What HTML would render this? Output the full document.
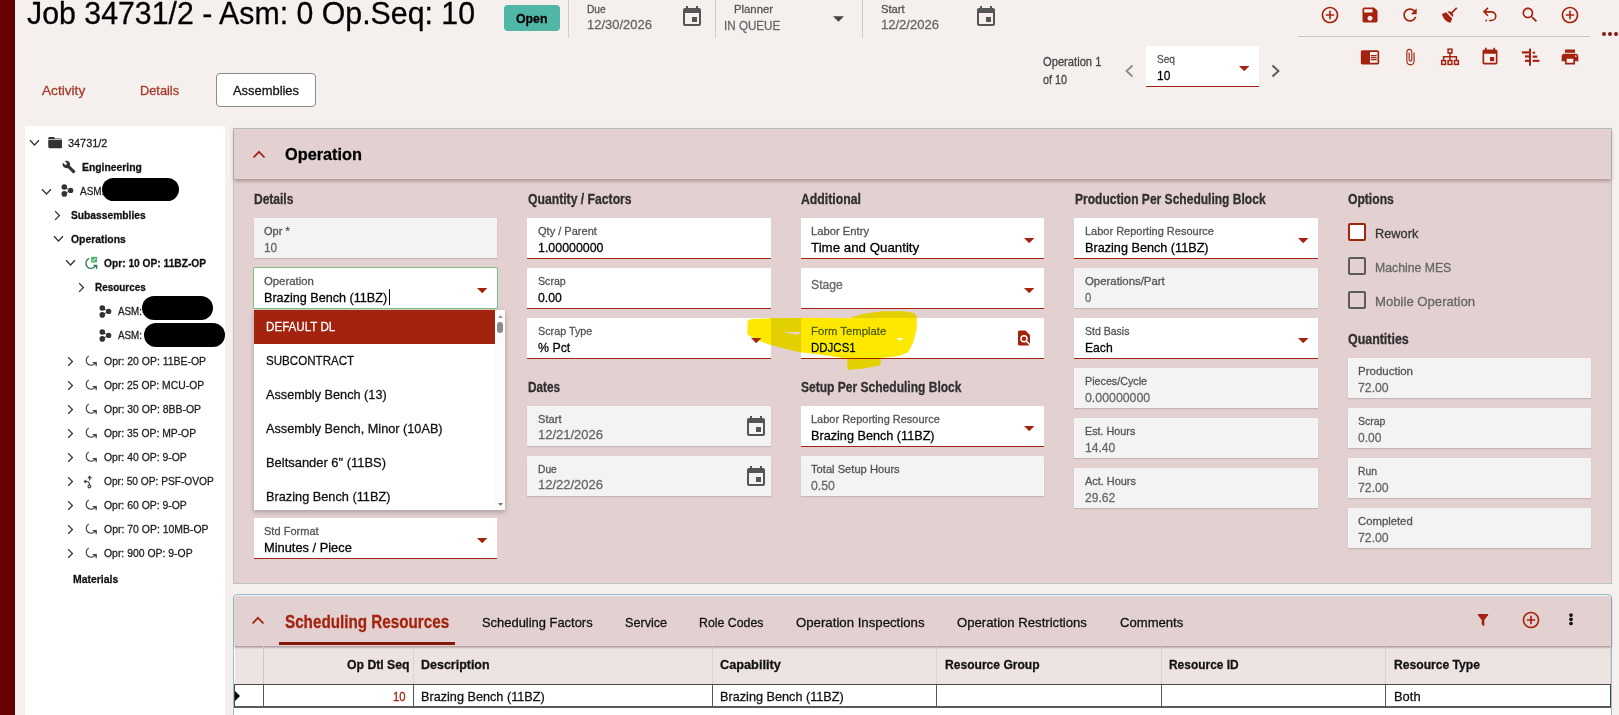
<!DOCTYPE html><html><head><meta charset="utf-8"><title>Job 34731/2</title><style>
html,body{margin:0;padding:0}body{width:1619px;height:715px;overflow:hidden;background:#f5f0ee;position:relative;font-family:"Liberation Sans", sans-serif}
body>div,body>svg,body>span{position:absolute}
span.t{-webkit-text-stroke:0.28px currentColor;white-space:nowrap;line-height:1;transform-origin:0 0;display:block}
</style></head><body>
<div style="left:0px;top:0px;width:15px;height:715px;background:#650101"></div>
<div style="left:504px;top:5px;width:56px;height:26px;background:#50b7a7;border-radius:4px"></div>
<div style="left:568px;top:0px;width:1px;height:38px;background:#d2cccb"></div>
<div style="left:715px;top:0px;width:1px;height:38px;background:#d2cccb"></div>
<div style="left:862px;top:0px;width:1px;height:38px;background:#d2cccb"></div>
<svg style="left:680px;top:5.2px" width="24" height="24" viewBox="0 0 24 24" fill="#555" ><path d="M17 12h-5v5h5v-5zM16 1v2H8V1H6v2H5c-1.11 0-1.99.9-1.99 2L3 19c0 1.1.89 2 2 2h14c1.1 0 2-.9 2-2V5c0-1.1-.9-2-2-2h-1V1h-2zm3 18H5V8h14v11z"/></svg>
<svg style="left:833px;top:16px" width="11" height="6" viewBox="0 0 10 5"><path d="M0 0h10L5 5z" fill="#444"/></svg>
<svg style="left:974px;top:5.2px" width="24" height="24" viewBox="0 0 24 24" fill="#555" ><path d="M17 12h-5v5h5v-5zM16 1v2H8V1H6v2H5c-1.11 0-1.99.9-1.99 2L3 19c0 1.1.89 2 2 2h14c1.1 0 2-.9 2-2V5c0-1.1-.9-2-2-2h-1V1h-2zm3 18H5V8h14v11z"/></svg>
<svg style="left:1123px;top:63px" width="12" height="16" viewBox="0 0 12 16" fill="none" stroke="#8a8a8a" stroke-width="1.8"><path d="M9.500 2.500L3.500 8l6 5.500"/></svg>
<svg style="left:1270px;top:63px" width="12" height="16" viewBox="0 0 12 16" fill="none" stroke="#555" stroke-width="1.8"><path d="M2.500 2.500L8.500 8l-6 5.500"/></svg>
<div style="left:1146px;top:46px;width:113px;height:40px;background:#fff;border-bottom:1px solid #a3230f"></div>
<svg style="left:1238.8px;top:65.9px" width="10.4" height="5.2" viewBox="0 0 10 5"><path d="M0 0h10L5 5z" fill="#a3230f"/></svg>
<div style="left:1298px;top:36px;width:292px;height:1px;background:#c9c5c4"></div>
<svg style="left:1320px;top:4.9px" width="20" height="20" viewBox="0 0 24 24" fill="#a3230f" ><path d="M13 7h-2v4H7v2h4v4h2v-4h4v-2h-4V7zm-1-5C6.48 2 2 6.48 2 12s4.48 10 10 10 10-4.48 10-10S17.52 2 12 2zm0 18c-4.41 0-8-3.59-8-8s3.59-8 8-8 8 3.59 8 8-3.59 8-8 8z"/></svg>
<svg style="left:1360px;top:4.9px" width="20" height="20" viewBox="0 0 24 24" fill="#a3230f" ><path d="M17 3H5c-1.11 0-2 .9-2 2v14c0 1.1.89 2 2 2h14c1.1 0 2-.9 2-2V7l-4-4zm-5 16c-1.66 0-3-1.34-3-3s1.34-3 3-3 3 1.34 3 3-1.34 3-3 3zm3-10H5V5h10v4z"/></svg>
<svg style="left:1400px;top:4.9px" width="20" height="20" viewBox="0 0 24 24" fill="#a3230f" ><path d="M17.65 6.35C16.2 4.9 14.21 4 12 4c-4.42 0-7.99 3.58-7.99 8s3.57 8 7.99 8c3.73 0 6.84-2.55 7.73-6h-2.08c-.82 2.33-3.04 4-5.65 4-3.31 0-6-2.69-6-6s2.69-6 6-6c1.66 0 3.14.69 4.22 1.78L13 11h7V4l-2.35 2.35z"/></svg>
<svg style="left:1440px;top:4.9px" width="20" height="20" viewBox="0 0 24 24" fill="#a3230f" ><path d="M19.360,2.720L20.780,4.140L15.060,9.850C16.130,11.390 16.280,13.240 15.380,14.440L9.060,8.120C10.260,7.220 12.110,7.370 13.650,8.440L19.360,2.720M5.930,17.570C3.920,15.560 2.690,13.160 2.350,10.920L7.230,8.830L14.670,16.270L12.580,21.150C10.340,20.810 7.940,19.580 5.930,17.570Z"/></svg>
<svg style="left:1480px;top:4.900px" width="20" height="20" viewBox="0 0 24 24" fill="none" stroke="#a3230f" stroke-width="2"><path d="M9.500 3.500L4.800 8.200l4.700 4.700M5 8.200h8.500c3 0 5.400 2.300 5.400 5.200s-2.400 5.200-5.400 5.200H11"/><path d="M6.500 18.600h2" /></svg>
<svg style="left:1520px;top:4.9px" width="20" height="20" viewBox="0 0 24 24" fill="#a3230f" ><path d="M15.5 14h-.79l-.28-.27C15.41 12.59 16 11.11 16 9.5 16 5.91 13.09 3 9.5 3S3 5.91 3 9.5 5.91 16 9.5 16c1.61 0 3.09-.59 4.23-1.57l.27.28v.79l5 4.990L20.490 19l-4.990-5zm-6 0C7.010 14 5 11.990 5 9.500S7.010 5 9.500 5 14 7.010 14 9.500 11.990 14 9.500 14z"/></svg>
<svg style="left:1560px;top:4.9px" width="20" height="20" viewBox="0 0 24 24" fill="#a3230f" ><path d="M13 7h-2v4H7v2h4v4h2v-4h4v-2h-4V7zm-1-5C6.48 2 2 6.48 2 12s4.48 10 10 10 10-4.48 10-10S17.52 2 12 2zm0 18c-4.41 0-8-3.59-8-8s3.59-8 8-8 8 3.59 8 8-3.59 8-8 8z"/></svg>
<svg style="left:1360px;top:46.5px" width="20" height="20" viewBox="0 0 24 24" fill="#a3230f" ><path d="M13 12h7v1.500h-7zm0-2.500h7V11h-7zm0 5h7V16h-7zM21 4H3c-1.100 0-2 .900-2 2v13c0 1.100.900 2 2 2h18c1.100 0 2-.900 2-2V6c0-1.100-.900-2-2-2zm0 15h-9V6h9v13z"/></svg>
<svg style="left:1400.9px;top:47.6px" width="18.2" height="18.2" viewBox="0 0 24 24" fill="#a3230f" ><path d="M16.500 6v11.500c0 2.210-1.790 4-4 4s-4-1.790-4-4V5c0-1.380 1.120-2.500 2.500-2.500s2.500 1.120 2.500 2.500v10.500c0 .550-.450 1-1 1s-1-.450-1-1V6H10v9.500c0 1.380 1.120 2.500 2.500 2.500s2.500-1.120 2.500-2.500V5c0-2.210-1.790-4-4-4S7 2.790 7 5v12.500c0 3.040 2.460 5.500 5.500 5.500s5.500-2.460 5.500-5.500V6h-1.500z"/></svg>
<svg style="left:1440px;top:46.500px" width="20" height="20" viewBox="0 0 24 24" fill="none" stroke="#a3230f" stroke-width="1.800"><rect x="9.700" y="2.600" width="4.600" height="4.600"/><rect x="2" y="16.300" width="4.600" height="4.600"/><rect x="9.700" y="16.300" width="4.600" height="4.600"/><rect x="17.400" y="16.300" width="4.600" height="4.600"/><path d="M12 7.200v9M4.300 16.300v-4.500h15.400v4.500"/></svg>
<svg style="left:1480px;top:46.5px" width="20" height="20" viewBox="0 0 24 24" fill="#a3230f" ><path d="M17 12h-5v5h5v-5zM16 1v2H8V1H6v2H5c-1.11 0-1.99.9-1.99 2L3 19c0 1.1.89 2 2 2h14c1.1 0 2-.9 2-2V5c0-1.1-.9-2-2-2h-1V1h-2zm3 18H5V8h14v11z"/></svg>
<svg style="left:1520px;top:46.500px" width="20" height="20" viewBox="0 0 24 24" fill="#a3230f"><rect x="10.800" y="2" width="2.400" height="20.500"/><rect x="2.300" y="5.200" width="9" height="2.600"/><rect x="15.200" y="5.600" width="3" height="2.400"/><rect x="6" y="10" width="5" height="2.600"/><rect x="15.200" y="10.300" width="5.500" height="2.600"/><rect x="6" y="15.300" width="5" height="2.600"/><rect x="15.200" y="15.300" width="8" height="2.600"/></svg>
<svg style="left:1560px;top:46.5px" width="20" height="20" viewBox="0 0 24 24" fill="#a3230f" ><path d="M19 8H5c-1.66 0-3 1.34-3 3v6h4v4h12v-4h4v-6c0-1.66-1.34-3-3-3zm-3 11H8v-5h8v5zm3-7c-.55 0-1-.45-1-1s.45-1 1-1 1 .45 1 1-.45 1-1 1zm-1-9H6v4h12V3z"/></svg>
<div style="left:1601.8999999999999px;top:32px;width:3.8px;height:3.8px;background:#8b1a0e;border-radius:50%"></div>
<div style="left:1608.0px;top:32px;width:3.8px;height:3.8px;background:#8b1a0e;border-radius:50%"></div>
<div style="left:1614.1px;top:32px;width:3.8px;height:3.8px;background:#8b1a0e;border-radius:50%"></div>
<div style="left:216px;top:73px;width:100px;height:34px;background:#fff;border:1px solid #8c8c8c;border-radius:4px;box-sizing:border-box"></div>
<div style="left:25px;top:126px;width:200px;height:589px;background:#fff"></div>
<svg style="left:28.6px;top:139.3px" width="11" height="8" viewBox="0 0 11 8" fill="none" stroke="#333" stroke-width="1.300"><path d="M1 1.300l4.500 4.700L10 1.300"/></svg>
<svg style="left:47.500px;top:137.400px" width="14.500" height="11.200" viewBox="0 0 20 16" fill="#333"><path d="M8 0H2C.9 0 0 .9 0 2v12c0 1.100.9 2 2 2h16c1.100 0 2-.9 2-2V4c0-1.100-.9-2-2-2h-8L8 0z"/><rect x="0" y="3.200" width="20" height="1" fill="#fff"/></svg>
<svg style="left:61.5px;top:160.3px" width="14" height="14" viewBox="0 0 24 24" fill="#333" ><path d="M22.700 19l-9.100-9.100c.900-2.300.400-5-1.500-6.900-2-2-5-2.400-7.400-1.300L9 6 6 9 1.600 4.700C.400 7.100.900 10.100 2.900 12.100c1.900 1.900 4.600 2.400 6.900 1.500l9.100 9.100c.400.400 1 .400 1.400 0l2.300-2.300c.500-.400.500-1.100.100-1.400z"/></svg>
<svg style="left:41px;top:187.5px" width="11" height="8" viewBox="0 0 11 8" fill="none" stroke="#333" stroke-width="1.300"><path d="M1 1.300l4.500 4.700L10 1.300"/></svg>
<svg style="left:61px;top:184.4px" width="13" height="13" viewBox="0 0 13 13" fill="#333"><circle cx="3.300" cy="3" r="2.800"/><circle cx="3.300" cy="9.900" r="2.800"/><circle cx="9.700" cy="6.400" r="2.600"/><path d="M3 3l6.500 3.400L3 10" stroke="#333" stroke-width="1" fill="none"/></svg>
<div style="left:101.7px;top:178px;width:77.3px;height:23.4px;background:#000;border-radius:12px;z-index:5"></div>
<svg style="left:54px;top:209.8px" width="8" height="11" viewBox="0 0 8 11" fill="none" stroke="#333" stroke-width="1.300"><path d="M1.100 1.100l4.300 4.400L1.100 9.900"/></svg>
<svg style="left:52.8px;top:235.3px" width="11" height="8" viewBox="0 0 11 8" fill="none" stroke="#333" stroke-width="1.300"><path d="M1 1.300l4.500 4.700L10 1.300"/></svg>
<svg style="left:64.8px;top:259.3px" width="11" height="8" viewBox="0 0 11 8" fill="none" stroke="#333" stroke-width="1.300"><path d="M1 1.300l4.500 4.700L10 1.300"/></svg>
<svg style="left:84px;top:255.500px" width="14" height="14" viewBox="0 0 14 14" fill="none"><path d="M5.170 2.400A5.200 5.200 0 1 0 11.700 9.600" stroke="#2e7d52" stroke-width="1.300"/><path d="M9.400 9.500h3.300v3.400" stroke="#2e7d52" stroke-width="1.300"/><path d="M10.600 9.500h2.100v2.100z" fill="#2e7d52"/><rect x="7.100" y="0.700" width="6" height="5.700" rx="0.600" fill="#4cb871"/><path d="M8.300 3.500l1.300 1.300 2.300-2.500" stroke="#fff" stroke-width="0.900"/></svg>
<svg style="left:78px;top:281.8px" width="8" height="11" viewBox="0 0 8 11" fill="none" stroke="#333" stroke-width="1.300"><path d="M1.100 1.100l4.300 4.400L1.100 9.900"/></svg>
<svg style="left:98.8px;top:304.8px" width="13" height="13" viewBox="0 0 13 13" fill="#333"><circle cx="3.300" cy="3" r="2.800"/><circle cx="3.300" cy="9.900" r="2.800"/><circle cx="9.700" cy="6.400" r="2.600"/><path d="M3 3l6.500 3.400L3 10" stroke="#333" stroke-width="1" fill="none"/></svg>
<div style="left:141.7px;top:296.2px;width:71.8px;height:23.5px;background:#000;border-radius:12px;z-index:5"></div>
<svg style="left:98.8px;top:328.7px" width="13" height="13" viewBox="0 0 13 13" fill="#333"><circle cx="3.300" cy="3" r="2.800"/><circle cx="3.300" cy="9.900" r="2.800"/><circle cx="9.700" cy="6.400" r="2.600"/><path d="M3 3l6.500 3.400L3 10" stroke="#333" stroke-width="1" fill="none"/></svg>
<div style="left:144.2px;top:323px;width:80.6px;height:24px;background:#000;border-radius:12px;z-index:5"></div>
<svg style="left:66.5px;top:356.0px" width="8" height="11" viewBox="0 0 8 11" fill="none" stroke="#333" stroke-width="1.300"><path d="M1.100 1.100l4.300 4.400L1.100 9.900"/></svg>
<svg style="left:83.7px;top:355.40000000000003px" width="13" height="13" viewBox="0 0 13 13" fill="none" stroke="#444" stroke-width="1.200"><path d="M4.740 1.070A4.900 4.900 0 1 0 11.300 7.900"/><path d="M8.700 7.700h3.500v3.500"/><path d="M10 7.700h2.200v2.200z" fill="#444" stroke="none"/></svg>
<svg style="left:66.5px;top:380.0px" width="8" height="11" viewBox="0 0 8 11" fill="none" stroke="#333" stroke-width="1.300"><path d="M1.100 1.100l4.300 4.400L1.100 9.900"/></svg>
<svg style="left:83.7px;top:379.40000000000003px" width="13" height="13" viewBox="0 0 13 13" fill="none" stroke="#444" stroke-width="1.200"><path d="M4.740 1.070A4.900 4.900 0 1 0 11.300 7.900"/><path d="M8.700 7.700h3.500v3.500"/><path d="M10 7.700h2.200v2.200z" fill="#444" stroke="none"/></svg>
<svg style="left:66.5px;top:404.0px" width="8" height="11" viewBox="0 0 8 11" fill="none" stroke="#333" stroke-width="1.300"><path d="M1.100 1.100l4.300 4.400L1.100 9.900"/></svg>
<svg style="left:83.7px;top:403.40000000000003px" width="13" height="13" viewBox="0 0 13 13" fill="none" stroke="#444" stroke-width="1.200"><path d="M4.740 1.070A4.900 4.900 0 1 0 11.300 7.900"/><path d="M8.700 7.700h3.500v3.500"/><path d="M10 7.700h2.200v2.200z" fill="#444" stroke="none"/></svg>
<svg style="left:66.5px;top:428.0px" width="8" height="11" viewBox="0 0 8 11" fill="none" stroke="#333" stroke-width="1.300"><path d="M1.100 1.100l4.300 4.400L1.100 9.900"/></svg>
<svg style="left:83.7px;top:427.40000000000003px" width="13" height="13" viewBox="0 0 13 13" fill="none" stroke="#444" stroke-width="1.200"><path d="M4.740 1.070A4.900 4.900 0 1 0 11.300 7.900"/><path d="M8.700 7.700h3.500v3.500"/><path d="M10 7.700h2.200v2.200z" fill="#444" stroke="none"/></svg>
<svg style="left:66.5px;top:452.0px" width="8" height="11" viewBox="0 0 8 11" fill="none" stroke="#333" stroke-width="1.300"><path d="M1.100 1.100l4.300 4.400L1.100 9.900"/></svg>
<svg style="left:83.7px;top:451.40000000000003px" width="13" height="13" viewBox="0 0 13 13" fill="none" stroke="#444" stroke-width="1.200"><path d="M4.740 1.070A4.900 4.900 0 1 0 11.300 7.900"/><path d="M8.700 7.700h3.500v3.500"/><path d="M10 7.700h2.200v2.200z" fill="#444" stroke="none"/></svg>
<svg style="left:66.5px;top:476.0px" width="8" height="11" viewBox="0 0 8 11" fill="none" stroke="#333" stroke-width="1.300"><path d="M1.100 1.100l4.300 4.400L1.100 9.900"/></svg>
<svg style="left:83px;top:474.5px" width="12" height="14" viewBox="0 0 12 14" fill="none" stroke="#444" stroke-width="1.150"><path d="M6.700 1.500V5.600M4.900 3.300L6.700 1.400L8.500 3.300M1.500 6.500H4.300M3.100 4.800L1.300 6.500L3.100 8.200M4.300 6.500Q6.600 7 6.500 10"/><circle cx="6.400" cy="11.500" r="1.400"/></svg>
<svg style="left:66.5px;top:500.0px" width="8" height="11" viewBox="0 0 8 11" fill="none" stroke="#333" stroke-width="1.300"><path d="M1.100 1.100l4.300 4.400L1.100 9.900"/></svg>
<svg style="left:83.7px;top:499.40000000000003px" width="13" height="13" viewBox="0 0 13 13" fill="none" stroke="#444" stroke-width="1.200"><path d="M4.740 1.070A4.900 4.900 0 1 0 11.300 7.900"/><path d="M8.700 7.700h3.500v3.500"/><path d="M10 7.700h2.200v2.200z" fill="#444" stroke="none"/></svg>
<svg style="left:66.5px;top:524.0px" width="8" height="11" viewBox="0 0 8 11" fill="none" stroke="#333" stroke-width="1.300"><path d="M1.100 1.100l4.300 4.400L1.100 9.900"/></svg>
<svg style="left:83.7px;top:523.4px" width="13" height="13" viewBox="0 0 13 13" fill="none" stroke="#444" stroke-width="1.200"><path d="M4.740 1.070A4.900 4.900 0 1 0 11.300 7.900"/><path d="M8.700 7.700h3.500v3.500"/><path d="M10 7.700h2.200v2.200z" fill="#444" stroke="none"/></svg>
<svg style="left:66.5px;top:548.0px" width="8" height="11" viewBox="0 0 8 11" fill="none" stroke="#333" stroke-width="1.300"><path d="M1.100 1.100l4.300 4.400L1.100 9.900"/></svg>
<svg style="left:83.7px;top:547.4px" width="13" height="13" viewBox="0 0 13 13" fill="none" stroke="#444" stroke-width="1.200"><path d="M4.740 1.070A4.900 4.900 0 1 0 11.300 7.900"/><path d="M8.700 7.700h3.500v3.500"/><path d="M10 7.700h2.200v2.200z" fill="#444" stroke="none"/></svg>
<div style="left:233px;top:128px;width:1379px;height:455.5px;background:#e3d0d0;border:1px solid #bcc2c4;box-sizing:border-box"></div>
<div style="left:234px;top:129px;width:1377px;height:49.5px;background:#e3d0d0;box-shadow:0 2px 4px rgba(60,30,30,.35)"></div>
<svg style="left:252px;top:149px" width="14" height="10" viewBox="0 0 14 10" fill="none" stroke="#a3230f" stroke-width="1.800"><path d="M1.500 8.500L7 2.800l5.500 5.700"/></svg>
<div style="left:253.7px;top:218px;width:243.5px;height:40px;background:#f3f3f3;box-shadow:0 1px 1px rgba(0,0,0,.12)"></div>
<div style="left:253px;top:267px;width:245px;height:42px;background:#fff;border:1px solid #77c283;border-radius:2px;box-sizing:border-box"></div>
<div style="left:388.5px;top:289px;width:1px;height:16px;background:#000"></div>
<svg style="left:477.3px;top:287.9px" width="10.4" height="5.2" viewBox="0 0 10 5"><path d="M0 0h10L5 5z" fill="#a3230f"/></svg>
<div style="left:253.7px;top:518px;width:243.5px;height:40px;background:#fff;border-bottom:1px solid #a3230f"></div>
<svg style="left:477.3px;top:537.9px" width="10.4" height="5.2" viewBox="0 0 10 5"><path d="M0 0h10L5 5z" fill="#a3230f"/></svg>
<div style="left:527.2px;top:218px;width:243.5px;height:40px;background:#fff;border-bottom:1px solid #a3230f"></div>
<div style="left:527.2px;top:268px;width:243.5px;height:40px;background:#fff;border-bottom:1px solid #a3230f"></div>
<div style="left:527.2px;top:318px;width:243.5px;height:40px;background:#fff;border-bottom:1px solid #a3230f"></div>
<svg style="left:750.8px;top:337.9px" width="10.4" height="5.2" viewBox="0 0 10 5"><path d="M0 0h10L5 5z" fill="#a3230f"/></svg>
<div style="left:527.2px;top:406px;width:243.5px;height:40px;background:#f3f3f3;box-shadow:0 1px 1px rgba(0,0,0,.12)"></div>
<svg style="left:744.4000000000001px;top:414.7px" width="24" height="24" viewBox="0 0 24 24" fill="#555" ><path d="M17 12h-5v5h5v-5zM16 1v2H8V1H6v2H5c-1.11 0-1.99.9-1.99 2L3 19c0 1.1.89 2 2 2h14c1.1 0 2-.9 2-2V5c0-1.1-.9-2-2-2h-1V1h-2zm3 18H5V8h14v11z"/></svg>
<div style="left:527.2px;top:456px;width:243.5px;height:40px;background:#f3f3f3;box-shadow:0 1px 1px rgba(0,0,0,.12)"></div>
<svg style="left:744.4000000000001px;top:464.7px" width="24" height="24" viewBox="0 0 24 24" fill="#555" ><path d="M17 12h-5v5h5v-5zM16 1v2H8V1H6v2H5c-1.11 0-1.99.9-1.99 2L3 19c0 1.1.89 2 2 2h14c1.1 0 2-.9 2-2V5c0-1.1-.9-2-2-2h-1V1h-2zm3 18H5V8h14v11z"/></svg>
<div style="left:800.7px;top:218px;width:243.5px;height:40px;background:#fff;border-bottom:1px solid #a3230f"></div>
<svg style="left:1024.3px;top:237.9px" width="10.4" height="5.2" viewBox="0 0 10 5"><path d="M0 0h10L5 5z" fill="#a3230f"/></svg>
<div style="left:800.7px;top:268px;width:243.5px;height:40px;background:#fff;border-bottom:1px solid #a3230f"></div>
<svg style="left:1024.3px;top:287.9px" width="10.4" height="5.2" viewBox="0 0 10 5"><path d="M0 0h10L5 5z" fill="#a3230f"/></svg>
<div style="left:800.7px;top:318px;width:243.5px;height:40px;background:#fff;border-bottom:1px solid #a3230f"></div>
<svg style="left:1015.1px;top:329.3px" width="18" height="18" viewBox="0 0 24 24" fill="#a3230f" ><path d="M9,13A3,3 0 0,0 12,16A3,3 0 0,0 15,13A3,3 0 0,0 12,10A3,3 0 0,0 9,13M20,19.590V8L14,2H6A2,2 0 0,0 4,4V20A2,2 0 0,0 6,22H18C18.450,22 18.850,21.850 19.190,21.600L14.760,17.170C13.960,17.690 13,18 12,18A5,5 0 0,1 7,13A5,5 0 0,1 12,8A5,5 0 0,1 17,13C17,14 16.690,14.960 16.170,15.750L20,19.590Z"/></svg>
<div style="left:800.7px;top:406px;width:243.5px;height:40px;background:#fff;border-bottom:1px solid #a3230f"></div>
<svg style="left:1024.3px;top:425.9px" width="10.4" height="5.2" viewBox="0 0 10 5"><path d="M0 0h10L5 5z" fill="#a3230f"/></svg>
<div style="left:800.7px;top:456px;width:243.5px;height:40px;background:#f3f3f3;box-shadow:0 1px 1px rgba(0,0,0,.12)"></div>
<div style="left:1074.2px;top:218px;width:243.5px;height:40px;background:#fff;border-bottom:1px solid #a3230f"></div>
<svg style="left:1297.8px;top:237.9px" width="10.4" height="5.2" viewBox="0 0 10 5"><path d="M0 0h10L5 5z" fill="#a3230f"/></svg>
<div style="left:1074.2px;top:268px;width:243.5px;height:40px;background:#f3f3f3;box-shadow:0 1px 1px rgba(0,0,0,.12)"></div>
<div style="left:1074.2px;top:318px;width:243.5px;height:40px;background:#fff;border-bottom:1px solid #a3230f"></div>
<svg style="left:1297.8px;top:337.9px" width="10.4" height="5.2" viewBox="0 0 10 5"><path d="M0 0h10L5 5z" fill="#a3230f"/></svg>
<div style="left:1074.2px;top:368px;width:243.5px;height:40px;background:#f3f3f3;box-shadow:0 1px 1px rgba(0,0,0,.12)"></div>
<div style="left:1074.2px;top:418px;width:243.5px;height:40px;background:#f3f3f3;box-shadow:0 1px 1px rgba(0,0,0,.12)"></div>
<div style="left:1074.2px;top:468px;width:243.5px;height:40px;background:#f3f3f3;box-shadow:0 1px 1px rgba(0,0,0,.12)"></div>
<div style="left:1347.7px;top:358px;width:243.5px;height:40px;background:#f3f3f3;box-shadow:0 1px 1px rgba(0,0,0,.12)"></div>
<div style="left:1347.7px;top:408px;width:243.5px;height:40px;background:#f3f3f3;box-shadow:0 1px 1px rgba(0,0,0,.12)"></div>
<div style="left:1347.7px;top:458px;width:243.5px;height:40px;background:#f3f3f3;box-shadow:0 1px 1px rgba(0,0,0,.12)"></div>
<div style="left:1347.7px;top:508px;width:243.5px;height:40px;background:#f3f3f3;box-shadow:0 1px 1px rgba(0,0,0,.12)"></div>
<div style="left:1348px;top:223.2px;width:18px;height:18px;background:#fff;border:2px solid #a3230f;border-radius:2px;box-sizing:border-box"></div>
<div style="left:1348px;top:257.2px;width:18px;height:18px;border:2px solid #5c5c5c;border-radius:2px;box-sizing:border-box"></div>
<div style="left:1348px;top:291.2px;width:18px;height:18px;border:2px solid #5c5c5c;border-radius:2px;box-sizing:border-box"></div>
<div style="left:254px;top:310px;width:251px;height:199.5px;background:#fff;box-shadow:0 2px 5px rgba(0,0,0,.25)"></div>
<div style="left:495px;top:310px;width:10px;height:199.5px;background:#fbfbfb"></div>
<div style="left:254px;top:310px;width:241px;height:34px;background:#a3230f"></div>
<div style="left:497.2px;top:322.3px;width:5.6px;height:10.5px;background:#8a8a8a;border-radius:3px"></div>
<svg style="left:497.500px;top:315px" width="5" height="3" viewBox="0 0 10 6"><path d="M0 6h10L5 0z" fill="#9a9a9a"/></svg>
<svg style="left:497.500px;top:502.500px" width="5" height="3" viewBox="0 0 10 6"><path d="M0 0h10L5 6z" fill="#777"/></svg>
<div style="left:233px;top:594px;width:1379px;height:125px;background:#fff;border:1.500px solid #93bfc9;border-radius:4px;box-sizing:border-box"></div>
<div style="left:234.5px;top:595.5px;width:1376px;height:50px;background:#e3d0d0;box-shadow:0 1px 2.500px rgba(40,20,20,.5);border-radius:3px 3px 0 0"></div>
<svg style="left:251px;top:614.700px" width="14" height="10" viewBox="0 0 14 10" fill="none" stroke="#a3230f" stroke-width="1.800"><path d="M1.500 8.500L7 2.800l5.500 5.700"/></svg>
<div style="left:279px;top:642px;width:176px;height:3.3px;background:#85170a"></div>
<svg style="left:1475.2px;top:611.8px" width="16" height="16" viewBox="0 0 24 24" fill="#a3230f" ><path d="M14,12V19.880C14.040,20.180 13.940,20.500 13.710,20.710C13.320,21.100 12.690,21.100 12.300,20.710L10.290,18.700C10.060,18.470 9.960,18.160 10,17.870V12H9.970L4.210,4.620C3.870,4.190 3.950,3.560 4.380,3.220C4.570,3.080 4.780,3 5,3V3H19V3C19.220,3 19.430,3.080 19.620,3.220C20.050,3.560 20.130,4.190 19.790,4.620L14.030,12H14Z"/></svg>
<svg style="left:1521.2px;top:609.5px" width="20" height="20" viewBox="0 0 24 24" fill="#a3230f" ><path d="M13 7h-2v4H7v2h4v4h2v-4h4v-2h-4V7zm-1-5C6.48 2 2 6.48 2 12s4.48 10 10 10 10-4.48 10-10S17.52 2 12 2zm0 18c-4.41 0-8-3.59-8-8s3.59-8 8-8 8 3.59 8 8-3.59 8-8 8z"/></svg>
<svg style="left:1566.200px;top:612px" width="10" height="15" viewBox="0 0 10 15" fill="#111"><circle cx="5" cy="3.100" r="1.850"/><circle cx="5" cy="7.300" r="1.850"/><circle cx="5" cy="11.500" r="1.850"/></svg>
<div style="left:234.5px;top:646px;width:1376px;height:38px;background:#eee3e3"></div>
<div style="left:234.5px;top:645.5px;width:1376px;height:3.5px;background:linear-gradient(rgba(50,25,25,.38),rgba(50,25,25,0))"></div>
<div style="left:263px;top:646px;width:0px;height:38px;border-left:1px solid #cfc6c6"></div>
<div style="left:413px;top:646px;width:0px;height:38px;border-left:1px dotted #cdbfbf"></div>
<div style="left:711.6px;top:646px;width:0px;height:38px;border-left:1px dotted #cdbfbf"></div>
<div style="left:936px;top:646px;width:0px;height:38px;border-left:1px dotted #cdbfbf"></div>
<div style="left:1161px;top:646px;width:0px;height:38px;border-left:1px dotted #cdbfbf"></div>
<div style="left:1385px;top:646px;width:0px;height:38px;border-left:1px dotted #cdbfbf"></div>
<div style="left:1610px;top:646px;width:0px;height:38px;border-left:1px dotted #cdbfbf"></div>
<div style="left:234px;top:683.5px;width:1377px;height:24.8px;background:#fff;border-top:1.500px solid #4a4a4a;border-bottom:2px solid #5a5a5a;border-right:1px solid #444;border-left:1px solid #444;box-sizing:border-box"></div>
<div style="left:263px;top:684px;width:1px;height:24px;background:#555"></div>
<div style="left:413px;top:684px;width:1px;height:24px;background:#555"></div>
<div style="left:711.6px;top:684px;width:1px;height:24px;background:#555"></div>
<div style="left:936px;top:684px;width:1px;height:24px;background:#555"></div>
<div style="left:1161px;top:684px;width:1px;height:24px;background:#555"></div>
<div style="left:1385px;top:684px;width:1px;height:24px;background:#555"></div>
<svg style="left:234.700px;top:691px" width="5" height="10" viewBox="0 0 5 10"><path d="M0 0l5 5-5 5z" fill="#000"/></svg>
<span class="t" id="t0" style="left:26.50px;top:-2.00px;font-size:30.5px;color:#000;transform:scaleX(0.9935);">Job 34731/2 - Asm: 0 Op.Seq: 10</span>
<span class="t" id="t1" style="left:516.00px;top:13.00px;font-size:12.5px;color:#000;font-weight:700;transform:scaleX(0.9858);">Open</span>
<span class="t" id="t2" style="left:587.30px;top:4.00px;font-size:11.2px;color:#535353;transform:scaleX(0.9108);">Due</span>
<span class="t" id="t3" style="left:587.30px;top:18.00px;font-size:13px;color:#666;transform:scaleX(0.9988);">12/30/2026</span>
<span class="t" id="t4" style="left:734.00px;top:4.00px;font-size:11.2px;color:#535353;transform:scaleX(1.0113);">Planner</span>
<span class="t" id="t5" style="left:723.70px;top:19.00px;font-size:13px;color:#666;transform:scaleX(0.8959);">IN QUEUE</span>
<span class="t" id="t6" style="left:881.00px;top:4.00px;font-size:11.2px;color:#535353;transform:scaleX(1.0025);">Start</span>
<span class="t" id="t7" style="left:881.00px;top:18.00px;font-size:13px;color:#666;transform:scaleX(1.0027);">12/2/2026</span>
<span class="t" id="t8" style="left:1043.00px;top:56.00px;font-size:12px;color:#444;transform:scaleX(0.9311);">Operation 1</span>
<span class="t" id="t9" style="left:1043.00px;top:74.00px;font-size:12px;color:#444;transform:scaleX(0.8988);">of 10</span>
<span class="t" id="t10" style="left:1156.50px;top:54.00px;font-size:11.2px;color:#535353;transform:scaleX(0.9042);">Seq</span>
<span class="t" id="t11" style="left:1156.50px;top:69.00px;font-size:13px;color:#000;transform:scaleX(0.9192);">10</span>
<span class="t" id="t12" style="left:42.00px;top:84.00px;font-size:13px;color:#a33a27;transform:scaleX(1.0493);">Activity</span>
<span class="t" id="t13" style="left:139.80px;top:84.00px;font-size:13px;color:#a33a27;transform:scaleX(0.9836);">Details</span>
<span class="t" id="t14" style="left:233.00px;top:84.00px;font-size:13px;color:#111;transform:scaleX(0.9929);">Assemblies</span>
<span class="t" id="t15" style="left:68.20px;top:138.00px;font-size:11.2px;color:#1c1c1c;transform:scaleX(0.9740);">34731/2</span>
<span class="t" id="t16" style="left:82.40px;top:162.00px;font-size:11.2px;color:#111;font-weight:700;transform:scaleX(0.9249);">Engineering</span>
<span class="t" id="t17" style="left:80.00px;top:186.00px;font-size:11.2px;color:#1c1c1c;transform:scaleX(0.8882);">ASM:</span>
<span class="t" id="t18" style="left:71.20px;top:210.00px;font-size:11.2px;color:#111;font-weight:700;transform:scaleX(0.9169);">Subassemblies</span>
<span class="t" id="t19" style="left:71.20px;top:234.00px;font-size:11.2px;color:#111;font-weight:700;transform:scaleX(0.9278);">Operations</span>
<span class="t" id="t20" style="left:104.20px;top:258.00px;font-size:11.2px;color:#111;font-weight:700;transform:scaleX(0.9124);">Opr: 10 OP: 11BZ-OP</span>
<span class="t" id="t21" style="left:95.20px;top:282.00px;font-size:11.2px;color:#111;font-weight:700;transform:scaleX(0.8861);">Resources</span>
<span class="t" id="t22" style="left:118.20px;top:306.00px;font-size:11.2px;color:#1c1c1c;transform:scaleX(0.8772);">ASM:</span>
<span class="t" id="t23" style="left:118.20px;top:330.00px;font-size:11.2px;color:#1c1c1c;transform:scaleX(0.8772);">ASM:</span>
<span class="t" id="t24" style="left:104.20px;top:356.00px;font-size:11.2px;color:#1c1c1c;transform:scaleX(0.9347);">Opr: 20 OP: 11BE-OP</span>
<span class="t" id="t25" style="left:104.20px;top:380.00px;font-size:11.2px;color:#1c1c1c;transform:scaleX(0.9254);">Opr: 25 OP: MCU-OP</span>
<span class="t" id="t26" style="left:104.20px;top:404.00px;font-size:11.2px;color:#1c1c1c;transform:scaleX(0.9351);">Opr: 30 OP: 8BB-OP</span>
<span class="t" id="t27" style="left:104.20px;top:428.00px;font-size:11.2px;color:#1c1c1c;transform:scaleX(0.9258);">Opr: 35 OP: MP-OP</span>
<span class="t" id="t28" style="left:104.20px;top:452.00px;font-size:11.2px;color:#1c1c1c;transform:scaleX(0.9312);">Opr: 40 OP: 9-OP</span>
<span class="t" id="t29" style="left:104.20px;top:476.00px;font-size:11.2px;color:#1c1c1c;transform:scaleX(0.9103);">Opr: 50 OP: PSF-OVOP</span>
<span class="t" id="t30" style="left:104.20px;top:500.00px;font-size:11.2px;color:#1c1c1c;transform:scaleX(0.9312);">Opr: 60 OP: 9-OP</span>
<span class="t" id="t31" style="left:104.20px;top:524.00px;font-size:11.2px;color:#1c1c1c;transform:scaleX(0.9346);">Opr: 70 OP: 10MB-OP</span>
<span class="t" id="t32" style="left:104.20px;top:548.00px;font-size:11.2px;color:#1c1c1c;transform:scaleX(0.9313);">Opr: 900 OP: 9-OP</span>
<span class="t" id="t33" style="left:73.40px;top:574.00px;font-size:11.2px;color:#111;font-weight:700;transform:scaleX(0.9317);">Materials</span>
<span class="t" id="t34" style="left:285.40px;top:146.00px;font-size:16.5px;color:#000;font-weight:700;transform:scaleX(0.9880);">Operation</span>
<span class="t" id="t35" style="left:254.40px;top:192.00px;font-size:14px;color:#2f2f2f;font-weight:700;transform:scaleX(0.8580);">Details</span>
<span class="t" id="t36" style="left:527.80px;top:192.00px;font-size:14px;color:#2f2f2f;font-weight:700;transform:scaleX(0.8704);">Quantity / Factors</span>
<span class="t" id="t37" style="left:801.20px;top:192.00px;font-size:14px;color:#2f2f2f;font-weight:700;transform:scaleX(0.8767);">Additional</span>
<span class="t" id="t38" style="left:1074.60px;top:192.00px;font-size:14px;color:#2f2f2f;font-weight:700;transform:scaleX(0.8597);">Production Per Scheduling Block</span>
<span class="t" id="t39" style="left:1347.60px;top:192.00px;font-size:14px;color:#2f2f2f;font-weight:700;transform:scaleX(0.8659);">Options</span>
<span class="t" id="t40" style="left:528.00px;top:380.00px;font-size:14px;color:#2f2f2f;font-weight:700;transform:scaleX(0.8416);">Dates</span>
<span class="t" id="t41" style="left:800.90px;top:380.00px;font-size:14px;color:#2f2f2f;font-weight:700;transform:scaleX(0.8597);">Setup Per Scheduling Block</span>
<span class="t" id="t42" style="left:1347.60px;top:332.00px;font-size:14px;color:#2f2f2f;font-weight:700;transform:scaleX(0.8865);">Quantities</span>
<span class="t" id="t43" style="left:264.20px;top:226.00px;font-size:11.2px;color:#535353;transform:scaleX(0.9876);">Opr *</span>
<span class="t" id="t44" style="left:264.20px;top:241.00px;font-size:13px;color:#666;transform:scaleX(0.9123);">10</span>
<span class="t" id="t45" style="left:264.40px;top:276.00px;font-size:11.2px;color:#535353;transform:scaleX(1.0134);">Operation</span>
<span class="t" id="t46" style="left:264.40px;top:291.00px;font-size:13px;color:#000;transform:scaleX(0.9706);">Brazing Bench (11BZ)</span>
<span class="t" id="t47" style="left:264.20px;top:526.00px;font-size:11.2px;color:#535353;transform:scaleX(0.9866);">Std Format</span>
<span class="t" id="t48" style="left:264.20px;top:541.00px;font-size:13px;color:#000;transform:scaleX(0.9879);">Minutes / Piece</span>
<span class="t" id="t49" style="left:537.70px;top:226.00px;font-size:11.2px;color:#535353;transform:scaleX(0.9865);">Qty / Parent</span>
<span class="t" id="t50" style="left:537.70px;top:241.00px;font-size:13px;color:#000;transform:scaleX(0.9536);">1.00000000</span>
<span class="t" id="t51" style="left:537.70px;top:276.00px;font-size:11.2px;color:#535353;transform:scaleX(0.9509);">Scrap</span>
<span class="t" id="t52" style="left:537.70px;top:291.00px;font-size:13px;color:#000;transform:scaleX(0.9402);">0.00</span>
<span class="t" id="t53" style="left:537.70px;top:326.00px;font-size:11.2px;color:#535353;transform:scaleX(0.9629);">Scrap Type</span>
<span class="t" id="t54" style="left:537.70px;top:341.00px;font-size:13px;color:#000;transform:scaleX(0.9509);">% Pct</span>
<span class="t" id="t55" style="left:537.70px;top:414.00px;font-size:11.2px;color:#535353;transform:scaleX(0.9941);">Start</span>
<span class="t" id="t56" style="left:537.70px;top:428.00px;font-size:13px;color:#666;transform:scaleX(0.9988);">12/21/2026</span>
<span class="t" id="t57" style="left:537.70px;top:464.00px;font-size:11.2px;color:#535353;transform:scaleX(0.9157);">Due</span>
<span class="t" id="t58" style="left:537.70px;top:478.00px;font-size:13px;color:#666;transform:scaleX(0.9988);">12/22/2026</span>
<span class="t" id="t59" style="left:811.20px;top:226.00px;font-size:11.2px;color:#535353;transform:scaleX(1.0027);">Labor Entry</span>
<span class="t" id="t60" style="left:811.20px;top:241.00px;font-size:13px;color:#000;transform:scaleX(1.0233);">Time and Quantity</span>
<span class="t" id="t61" style="left:811.20px;top:276.00px;font-size:11.2px;color:#535353;transform:scaleX(1.0000);"></span>
<span class="t" id="t62" style="left:811.30px;top:278.00px;font-size:13px;color:#666;transform:scaleX(0.9387);">Stage</span>
<span class="t" id="t63" style="left:811.20px;top:326.00px;font-size:11.2px;color:#535353;transform:scaleX(1.0107);">Form Template</span>
<span class="t" id="t64" style="left:811.20px;top:341.00px;font-size:13px;color:#000;transform:scaleX(0.8838);">DDJCS1</span>
<span class="t" id="t65" style="left:811.20px;top:414.00px;font-size:11.2px;color:#535353;transform:scaleX(0.9816);">Labor Reporting Resource</span>
<span class="t" id="t66" style="left:811.20px;top:429.00px;font-size:13px;color:#000;transform:scaleX(0.9737);">Brazing Bench (11BZ)</span>
<span class="t" id="t67" style="left:811.20px;top:464.00px;font-size:11.2px;color:#535353;transform:scaleX(0.9973);">Total Setup Hours</span>
<span class="t" id="t68" style="left:811.20px;top:479.00px;font-size:13px;color:#666;transform:scaleX(0.9442);">0.50</span>
<span class="t" id="t69" style="left:1084.70px;top:226.00px;font-size:11.2px;color:#535353;transform:scaleX(0.9823);">Labor Reporting Resource</span>
<span class="t" id="t70" style="left:1084.70px;top:241.00px;font-size:13px;color:#000;transform:scaleX(0.9737);">Brazing Bench (11BZ)</span>
<span class="t" id="t71" style="left:1084.70px;top:276.00px;font-size:11.2px;color:#535353;transform:scaleX(1.0171);">Operations/Part</span>
<span class="t" id="t72" style="left:1084.70px;top:291.00px;font-size:13px;color:#666;transform:scaleX(0.8708);">0</span>
<span class="t" id="t73" style="left:1084.70px;top:326.00px;font-size:11.2px;color:#535353;transform:scaleX(0.9394);">Std Basis</span>
<span class="t" id="t74" style="left:1084.70px;top:341.00px;font-size:13px;color:#000;transform:scaleX(0.9345);">Each</span>
<span class="t" id="t75" style="left:1084.70px;top:376.00px;font-size:11.2px;color:#535353;transform:scaleX(0.9602);">Pieces/Cycle</span>
<span class="t" id="t76" style="left:1084.70px;top:391.00px;font-size:13px;color:#666;transform:scaleX(0.9492);">0.00000000</span>
<span class="t" id="t77" style="left:1084.70px;top:426.00px;font-size:11.2px;color:#535353;transform:scaleX(0.9630);">Est. Hours</span>
<span class="t" id="t78" style="left:1084.70px;top:441.00px;font-size:13px;color:#666;transform:scaleX(0.9310);">14.40</span>
<span class="t" id="t79" style="left:1084.70px;top:476.00px;font-size:11.2px;color:#535353;transform:scaleX(0.9745);">Act. Hours</span>
<span class="t" id="t80" style="left:1084.70px;top:491.00px;font-size:13px;color:#666;transform:scaleX(0.9310);">29.62</span>
<span class="t" id="t81" style="left:1358.20px;top:366.00px;font-size:11.2px;color:#535353;transform:scaleX(1.0280);">Production</span>
<span class="t" id="t82" style="left:1358.20px;top:381.00px;font-size:13px;color:#666;transform:scaleX(0.9433);">72.00</span>
<span class="t" id="t83" style="left:1358.20px;top:416.00px;font-size:11.2px;color:#535353;transform:scaleX(0.9373);">Scrap</span>
<span class="t" id="t84" style="left:1358.20px;top:431.00px;font-size:13px;color:#666;transform:scaleX(0.9244);">0.00</span>
<span class="t" id="t85" style="left:1358.20px;top:466.00px;font-size:11.2px;color:#535353;transform:scaleX(0.9303);">Run</span>
<span class="t" id="t86" style="left:1358.20px;top:481.00px;font-size:13px;color:#666;transform:scaleX(0.9433);">72.00</span>
<span class="t" id="t87" style="left:1358.20px;top:516.00px;font-size:11.2px;color:#535353;transform:scaleX(1.0109);">Completed</span>
<span class="t" id="t88" style="left:1358.20px;top:531.00px;font-size:13px;color:#666;transform:scaleX(0.9433);">72.00</span>
<span class="t" id="t89" style="left:1375.30px;top:227.00px;font-size:13px;color:#333;transform:scaleX(0.9823);">Rework</span>
<span class="t" id="t90" style="left:1375.30px;top:261.00px;font-size:13px;color:#666;transform:scaleX(0.9429);">Machine MES</span>
<span class="t" id="t91" style="left:1375.30px;top:295.00px;font-size:13px;color:#666;transform:scaleX(1.0101);">Mobile Operation</span>
<span class="t" id="t92" style="left:265.80px;top:320.00px;font-size:13px;color:#fff;transform:scaleX(0.8937);">DEFAULT DL</span>
<span class="t" id="t93" style="left:265.80px;top:354.00px;font-size:13px;color:#111;transform:scaleX(0.8913);">SUBCONTRACT</span>
<span class="t" id="t94" style="left:265.80px;top:388.00px;font-size:13px;color:#111;transform:scaleX(0.9768);">Assembly Bench (13)</span>
<span class="t" id="t95" style="left:265.80px;top:422.00px;font-size:13px;color:#111;transform:scaleX(0.9777);">Assembly Bench, Minor (10AB)</span>
<span class="t" id="t96" style="left:265.80px;top:456.00px;font-size:13px;color:#111;transform:scaleX(0.9940);">Beltsander 6&quot; (11BS)</span>
<span class="t" id="t97" style="left:265.80px;top:490.00px;font-size:13px;color:#111;transform:scaleX(0.9808);">Brazing Bench (11BZ)</span>
<span class="t" id="t98" style="left:285.10px;top:614.00px;font-size:17.5px;color:#a3230f;font-weight:700;transform:scaleX(0.8698);">Scheduling Resources</span>
<span class="t" id="t99" style="left:481.50px;top:616.00px;font-size:13px;color:#111;transform:scaleX(0.9939);">Scheduling Factors</span>
<span class="t" id="t100" style="left:624.60px;top:616.00px;font-size:13px;color:#111;transform:scaleX(0.9710);">Service</span>
<span class="t" id="t101" style="left:699.10px;top:616.00px;font-size:13px;color:#111;transform:scaleX(0.9494);">Role Codes</span>
<span class="t" id="t102" style="left:796.30px;top:616.00px;font-size:13px;color:#111;transform:scaleX(1.0161);">Operation Inspections</span>
<span class="t" id="t103" style="left:957.20px;top:616.00px;font-size:13px;color:#111;transform:scaleX(1.0099);">Operation Restrictions</span>
<span class="t" id="t104" style="left:1119.70px;top:616.00px;font-size:13px;color:#111;transform:scaleX(1.0070);">Comments</span>
<span class="t" id="t105" style="left:346.70px;top:658.00px;font-size:13px;color:#111;font-weight:700;transform:scaleX(0.9405);">Op Dtl Seq</span>
<span class="t" id="t106" style="left:420.60px;top:658.00px;font-size:13px;color:#111;font-weight:700;transform:scaleX(0.9592);">Description</span>
<span class="t" id="t107" style="left:720.10px;top:658.00px;font-size:13px;color:#111;font-weight:700;transform:scaleX(0.9787);">Capability</span>
<span class="t" id="t108" style="left:944.90px;top:658.00px;font-size:13px;color:#111;font-weight:700;transform:scaleX(0.9287);">Resource Group</span>
<span class="t" id="t109" style="left:1169.40px;top:658.00px;font-size:13px;color:#111;font-weight:700;transform:scaleX(0.9186);">Resource ID</span>
<span class="t" id="t110" style="left:1394.20px;top:658.00px;font-size:13px;color:#111;font-weight:700;transform:scaleX(0.9322);">Resource Type</span>
<span class="t" id="t111" style="left:392.50px;top:690.00px;font-size:13px;color:#a3230f;transform:scaleX(0.8708);">10</span>
<span class="t" id="t112" style="left:420.60px;top:690.00px;font-size:13px;color:#111;transform:scaleX(0.9745);">Brazing Bench (11BZ)</span>
<span class="t" id="t113" style="left:720.10px;top:690.00px;font-size:13px;color:#111;transform:scaleX(0.9753);">Brazing Bench (11BZ)</span>
<span class="t" id="t114" style="left:1394.20px;top:690.00px;font-size:13px;color:#111;transform:scaleX(0.9944);">Both</span>
<svg style="left:0;top:0;mix-blend-mode:darken" width="1619" height="715" viewBox="0 0 1619 715"><path d="M748,321.100L751.100,319.600L770.900,318.800L814.100,318.300L848.700,318.800L863.500,314.300L882.100,311.800L904.300,311.800L914.200,313.600L916.400,317.400L916,329.700L912.900,342.100L908,351.900L898.100,355.600L880.200,357.500L880.200,364.900L863.500,368L848.100,369.500L847.500,358.100L826.500,355L801.800,351.900L791.900,350.100L770.900,344.500L758.500,340.200L748,334.600Z M775.800,331.200L796.800,335.300L800.500,334L800.500,331.600Z M895,337.700L900,341.400L904.900,337.400Z" fill="#ffe800" fill-rule="evenodd" stroke="#ffe800" stroke-width="1" stroke-linejoin="round"/></svg>
</body></html>
